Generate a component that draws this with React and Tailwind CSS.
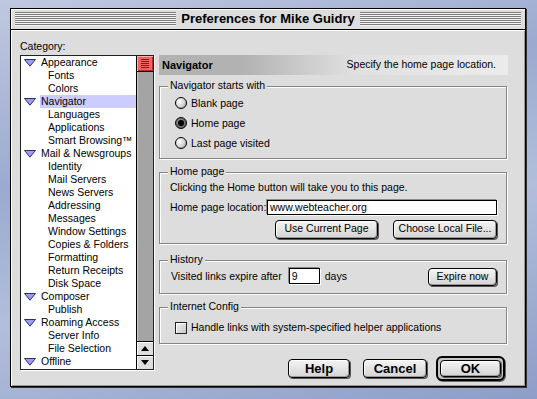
import React from 'react';

const categories = [
  { label: 'Appearance', parent: true },
  { label: 'Fonts' },
  { label: 'Colors' },
  { label: 'Navigator', parent: true, selected: true },
  { label: 'Languages' },
  { label: 'Applications' },
  { label: 'Smart Browsing™' },
  { label: 'Mail & Newsgroups', parent: true },
  { label: 'Identity' },
  { label: 'Mail Servers' },
  { label: 'News Servers' },
  { label: 'Addressing' },
  { label: 'Messages' },
  { label: 'Window Settings' },
  { label: 'Copies & Folders' },
  { label: 'Formatting' },
  { label: 'Return Receipts' },
  { label: 'Disk Space' },
  { label: 'Composer', parent: true },
  { label: 'Publish' },
  { label: 'Roaming Access', parent: true },
  { label: 'Server Info' },
  { label: 'File Selection' },
  { label: 'Offline', parent: true },
];

function Disclosure() {
  return (
    <svg width="12" height="8" viewBox="0 0 12 8" className="shrink-0">
      <polygon points="0.5,0.5 11.5,0.5 6,7.2" fill="#9c9cf4" stroke="#2e2e66" strokeWidth="1" />
    </svg>
  );
}

function Stripes() {
  return (
    <div className="flex-1 h-[14px] bg-[repeating-linear-gradient(to_bottom,#7c7c7c_0px,#7c7c7c_1px,#f4f4f4_1px,#f4f4f4_2px)]" />
  );
}

function Group({ title, className = '', children }) {
  return (
    <div className={`relative border border-[#858585] shadow-[inset_1px_1px_0_#fff,1px_1px_0_#fff] ${className}`}>
      <span className="absolute -top-[8px] left-[8px] bg-[#dddddd] px-[2px] text-[10.5px] leading-[13px] whitespace-nowrap">{title}</span>
      {children}
    </div>
  );
}

function Button({ children, className = '', bold }) {
  return (
    <div
      className={`flex items-center justify-center whitespace-nowrap rounded-[4px] border border-black bg-[linear-gradient(to_bottom,#f4f4f4,#d4d4d4)] shadow-[inset_1px_1px_0_#fff,inset_-1px_-1px_0_#9a9a9a,1px_1px_0_#555] ${
        bold ? 'font-bold text-[13px]' : 'text-[10.5px]'
      } ${className}`}
    >
      {children}
    </div>
  );
}

function Radio({ checked, label }) {
  return (
    <div className="flex items-center h-[20px] gap-[4px]">
      <div
        className={`w-[12px] h-[12px] rounded-full border border-black flex items-center justify-center ${
          checked
            ? 'bg-[radial-gradient(circle_at_40%_40%,#9a9a9a,#4a4a4a)]'
            : 'bg-[radial-gradient(circle_at_35%_35%,#ffffff,#d0d0d0_55%,#8a8a8a)]'
        }`}
      >
        {checked && <div className="w-[6px] h-[6px] rounded-full bg-black" />}
      </div>
      <span className="text-[10.5px] leading-[13px]">{label}</span>
    </div>
  );
}

export default function App() {
  return (
    <div className="w-[537px] h-[399px] overflow-hidden pt-[8px] pl-[10px] bg-[linear-gradient(165deg,#c0c8e0_0%,#9aaad0_35%,#b2bedb_60%,#8d9dc8_100%)] font-['Liberation_Sans',Arial,sans-serif] text-black">
      <div className="w-[516px] h-[379px] border border-black bg-[#dddddd] shadow-[1px_1px_0_#333] flex flex-col">
        {/* title bar */}
        <div className="h-[20px] shrink-0 flex items-center gap-[5px] px-[4px] shadow-[inset_1px_1px_0_#fff]">
          <Stripes />
          <span className="font-bold text-[13px] leading-[16px] whitespace-nowrap">Preferences for Mike Guidry</span>
          <Stripes />
        </div>
        <div className="h-[1px] bg-black shrink-0" />

        {/* body */}
        <div className="flex-1 flex shadow-[inset_1px_1px_0_#fff,inset_-1px_-1px_0_#999]">
          {/* category list */}
          <div className="pl-[9px] pt-[10px]">
            <div className="h-[13px] text-[10.5px] leading-[13px]">Category:</div>
            <div className="mt-[2px] w-[134px] h-[315px] border border-[#222] shadow-[1px_1px_0_#fff] flex bg-white">
              <div className="flex-1 overflow-hidden">
                {categories.map((c) =>
                  c.parent ? (
                    <div key={c.label} className="h-[13px] flex items-center pl-[3px] gap-[4px]">
                      <Disclosure />
                      <span className={`flex-1 pl-[1px] text-[10.5px] leading-[13px] whitespace-nowrap ${c.selected ? 'bg-[#ccccff]' : ''}`}>
                        {c.label}
                      </span>
                    </div>
                  ) : (
                    <div key={c.label} className="h-[13px] pl-[27px] text-[10.5px] leading-[13px] whitespace-nowrap">
                      {c.label}
                    </div>
                  )
                )}
              </div>
              {/* scrollbar */}
              <div className="w-[17px] shrink-0 border-l border-black bg-[#a4a4a4] shadow-[inset_1px_0_0_#c8c8c8] flex flex-col">
                <div className="h-[16px] border-b border-black bg-[#f26464] shadow-[inset_1px_1px_0_#ffb0b0,inset_-1px_-1px_0_#b03030] flex flex-col items-center justify-center gap-[1px]">
                  {[0, 1, 2, 3, 4].map((i) => (
                    <div key={i} className="w-[8px] h-[1px] bg-[#8a1a1a]" />
                  ))}
                </div>
                <div className="flex-1" />
                <div className="h-[14px] border-t border-black bg-[#dedede] shadow-[inset_1px_1px_0_#fff] flex items-center justify-center">
                  <svg width="8" height="5" viewBox="0 0 8 5"><polygon points="4,0 8,5 0,5" fill="#000" /></svg>
                </div>
                <div className="h-[14px] border-t border-black bg-[#dedede] shadow-[inset_1px_1px_0_#fff] flex items-center justify-center">
                  <svg width="8" height="5" viewBox="0 0 8 5"><polygon points="0,0 8,0 4,5" fill="#000" /></svg>
                </div>
              </div>
            </div>
          </div>

          {/* right panel */}
          <div className="ml-[5px] w-[349px] pt-[25px] flex flex-col">
            <div className="h-[20px] flex items-center justify-between pl-[3px] pr-[12px] bg-[linear-gradient(to_right,#b2b2b2_0%,#b2b2b2_24%,#e0e0e0_56%,#ececec_100%)]">
              <span className="font-bold text-[11px]">Navigator</span>
              <span className="text-[10.5px]">Specify the home page location.</span>
            </div>

            <Group title="Navigator starts with" className="mt-[11px] w-[348px] h-[73px] pl-[15px] pt-[6px]">
              <Radio label="Blank page" />
              <Radio label="Home page" checked />
              <Radio label="Last page visited" />
            </Group>

            <Group title="Home page" className="mt-[13px] w-[348px] h-[72px] pl-[10px] pr-[9px] pt-[8px]">
              <div className="h-[13px] text-[10.5px] leading-[13px] whitespace-nowrap">Clicking the Home button will take you to this page.</div>
              <div className="mt-[6px] flex items-center justify-between">
                <span className="text-[10.5px] whitespace-nowrap">Home page location:</span>
                <div className="w-[230px] h-[15px] border border-black bg-white shadow-[1px_1px_0_#fff,-1px_-1px_0_#8a8a8a] pl-[2px] text-[10.5px] leading-[13px]">
                  www.webteacher.org
                </div>
              </div>
              <div className="mt-[4px] flex justify-end gap-[15px]">
                <Button className="w-[103px] h-[19px]">Use Current Page</Button>
                <Button className="w-[104px] h-[19px]">Choose Local File...</Button>
              </div>
            </Group>

            <Group title="History" className="mt-[16px] w-[348px] h-[34px] pl-[11px] pr-[9px] pt-[7px]">
              <div className="flex items-start">
                <span className="text-[10.5px] leading-[16px] whitespace-nowrap">Visited links expire after</span>
                <div className="ml-[7px] w-[31px] h-[16px] border border-black bg-white shadow-[1px_1px_0_#fff,-1px_-1px_0_#8a8a8a] pl-[2px] text-[10.5px] leading-[14px]">
                  9
                </div>
                <span className="ml-[5px] text-[10.5px] leading-[16px]">days</span>
                <div className="flex-1" />
                <Button className="w-[69px] h-[18px]">Expire now</Button>
              </div>
            </Group>

            <Group title="Internet Config" className="mt-[13px] w-[348px] h-[37px] pl-[15px] pt-[13px]">
              <div className="flex items-center gap-[4px]">
                <div className="w-[12px] h-[12px] border border-[#222] bg-[linear-gradient(to_bottom_right,#f2f2f2,#c8c8c8)] shadow-[inset_1px_1px_0_#fff]" />
                <span className="text-[10.5px] leading-[13px] whitespace-nowrap">Handle links with system-specified helper applications</span>
              </div>
            </Group>

            <div className="mt-[12px] flex items-center justify-end pr-[3px]">
              <Button bold className="w-[62px] h-[19px]">Help</Button>
              <Button bold className="ml-[13px] w-[64px] h-[19px]">Cancel</Button>
              <div className="ml-[9px] w-[69px] h-[25px] rounded-[6px] border-2 border-black bg-[#c4c4c4] p-[2px] shadow-[1px_1px_0_#666]">
                <Button bold className="w-full h-full rounded-[3px]">OK</Button>
              </div>
            </div>
          </div>
        </div>
      </div>
    </div>
  );
}
